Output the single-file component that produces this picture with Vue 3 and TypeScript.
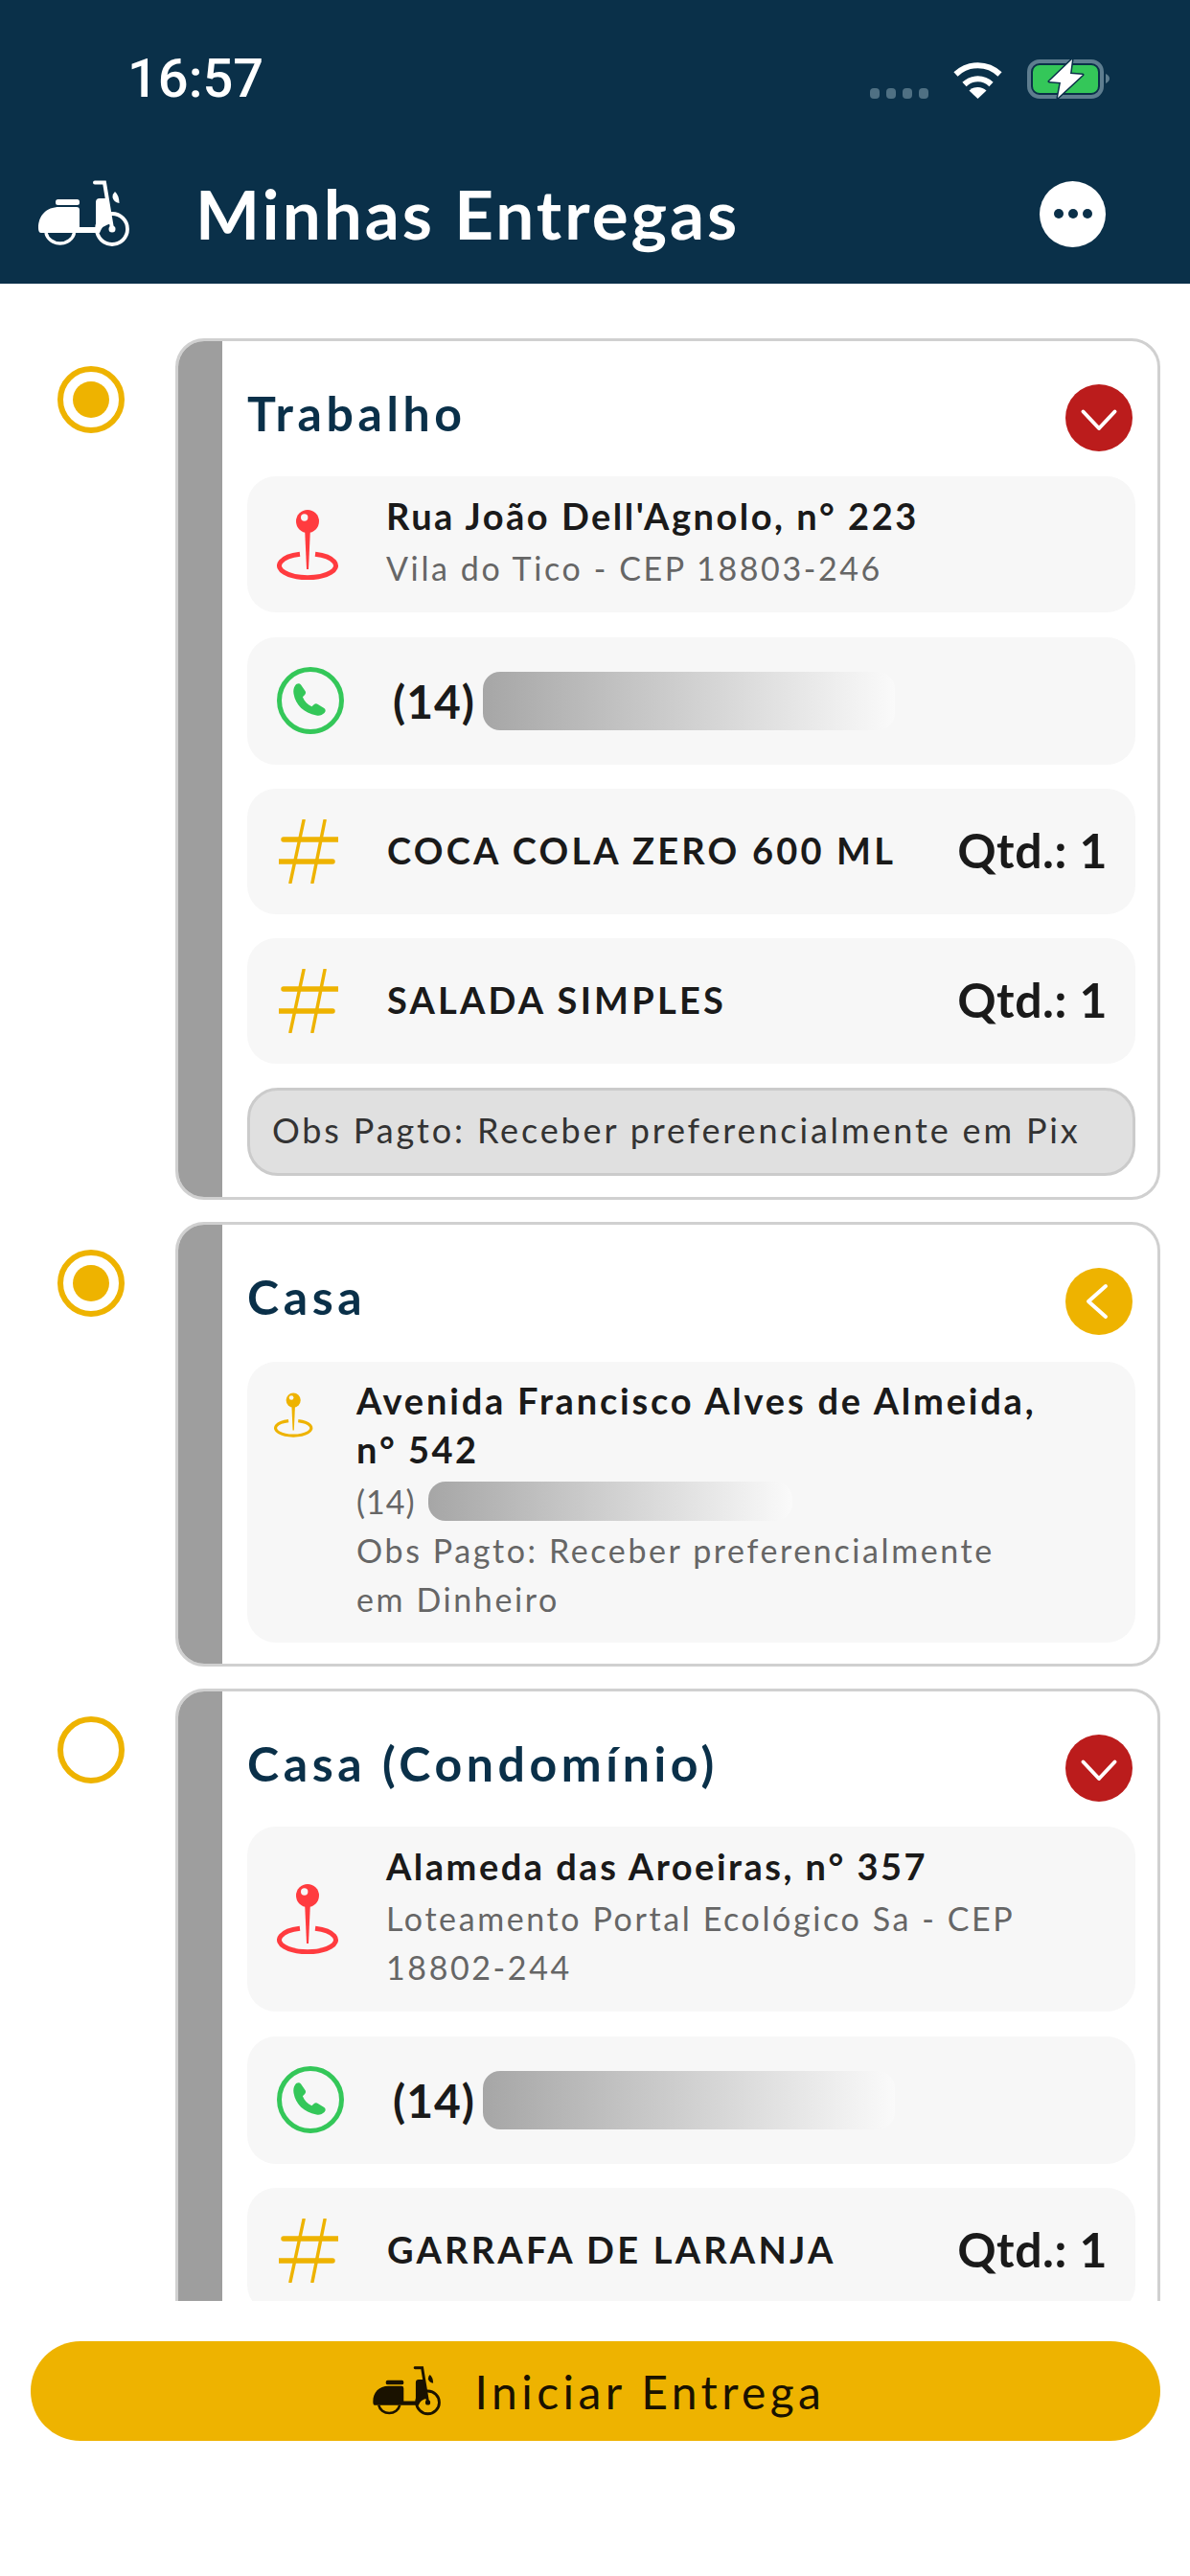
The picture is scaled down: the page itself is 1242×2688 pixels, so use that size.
<template>
  <div class="page">
    <svg class="defs" width="0" height="0">
      <symbol id="scooter" viewBox="10 13 96 70">
        <path d="M10 63c0-13 8-22 22-22h18q3 0 3 3v18h17V36q0-4 4-4h8l5 26q-11 2-13 10H13q-3 0-3-5z" fill="currentColor" />
        <rect x="28" y="33" width="25" height="6" rx="2.5" fill="currentColor" />
        <path d="M18 68a15 13.500 0 0 0 29.500 0" fill="none" stroke="currentColor" stroke-width="3.500" />
        <circle cx="87" cy="64" r="16" fill="none" stroke="currentColor" stroke-width="3.800" />
        <circle cx="87" cy="64" r="3.500" fill="currentColor" />
        <path d="M69 15.500h10l8 48" fill="none" stroke="currentColor" stroke-width="4" stroke-linecap="round" />
        <path d="M90 25q4.500 4 4.500 12q-6-1-7-6q0-4 2.500-6z" fill="currentColor" />
      </symbol>
      <symbol id="pin" viewBox="0 0 65 73">
        <circle cx="32" cy="12" r="12" fill="currentColor" />
        <circle cx="28.700" cy="8" r="3.700" fill="#f7f7f7" />
        <path d="M29 18h6l-2 44h-2z" fill="currentColor" />
        <path d="M24 46.200A29.500 12.500 0 1 0 40 46.200" fill="none" stroke="currentColor" stroke-width="5" />
      </symbol>
    </svg>

    <header class="header">
      <div class="status">
        <span class="time">16:57</span>
        <div class="status-icons">
          <div class="signal"><i v-for="n in 4" :key="n" /></div>
          <svg class="wifi" width="53" height="39" viewBox="0 0 53 39">
            <path d="M3.500 13.500a33 33 0 0 1 46 0M12.500 24a20 20 0 0 1 28 0" fill="none" stroke="#fff" stroke-width="6" />
            <path d="M17.500 30.500a13 13 0 0 1 18 0L26.500 39z" fill="#fff" />
          </svg>
          <svg class="battery" width="86" height="42" viewBox="0 0 86 42">
            <rect x="2" y="3" width="76" height="37" rx="11" fill="none" stroke="#5e7d8f" stroke-width="4" />
            <rect x="6" y="7" width="68" height="29" rx="7" fill="#34c759" />
            <path d="M82 16q4 2 4 5t-4 5z" fill="#5e7d8f" />
            <path d="M47 1 23 24l12 1-3 16 26-24-13-1z" fill="#fff" stroke="#0a3049" stroke-width="3" paint-order="stroke" stroke-linejoin="round" />
          </svg>
        </div>
      </div>
      <div class="nav">
        <svg class="nav-scooter"><use href="#scooter" /></svg>
        <h1>Minhas Entregas</h1>
        <button class="more"><i /><i /><i /></button>
      </div>
    </header>

    <main class="list">
      <div v-for="d in deliveries" :key="d.title" class="delivery">
        <span class="radio" :class="{ on: d.selected }" />
        <section class="card">
          <div class="card-bar" />
          <div class="card-body">
            <div class="card-head">
              <h2>{{ d.title }}</h2>
              <span class="toggle" :class="d.open ? 'red' : 'yellow'">
                <svg width="70" height="70" viewBox="0 0 70 70">
                  <path :d="d.open ? 'M18.500 28.500 35 46l16.500-17.500' : 'M42 19 24 35l18 16'" fill="none" stroke="#fff" stroke-width="4" stroke-linecap="round" stroke-linejoin="round" />
                </svg>
              </span>
            </div>

            <template v-if="d.open">
              <div class="row address">
                <svg class="pin red-pin"><use href="#pin" /></svg>
                <div class="lines">
                  <div class="street">{{ d.street }}</div>
                  <div v-for="line in d.district" :key="line" class="district">{{ line }}</div>
                </div>
              </div>
              <div class="row phone">
                <svg width="70" height="70" viewBox="0 0 70 70">
                  <circle cx="35" cy="35" r="32.500" fill="none" stroke="#34c759" stroke-width="5" />
                  <path d="M19 19.500c1.500-2.500 4.500-3 6-1l4.500 6.500c1 1.500.6 3-.6 4.200l-2 2c1.800 4.500 5 8 9.500 10l2.200-2c1.200-1 2.800-1.200 4.200-.3l6.500 4.200c1.800 1.200 1.800 3.500.2 5-2.200 2-5 3.200-8.300 2.400C28 48 19.500 39.500 17.500 28c-.6-3.500 0-6.300 1.500-8.500z" fill="#34c759" />
                </svg>
                <span class="ddd">(14)</span>
                <span class="blur-bar" />
              </div>
              <div v-for="item in d.items" :key="item" class="row product">
                <svg class="hash" width="62" height="67" viewBox="0 0 62 67">
                  <path d="M5 21h56M1 44h55" stroke="#eeb300" stroke-width="5.500" stroke-linecap="round" />
                  <path d="M26 1 12 66M48 1 35 66" stroke="#eeb300" stroke-width="3.500" stroke-linecap="round" />
                </svg>
                <span class="product-name">{{ item }}</span>
                <span class="qty">Qtd.: 1</span>
              </div>
              <div v-if="d.obs" class="obs">{{ d.obs }}</div>
            </template>

            <div v-else class="row summary">
              <svg class="pin yellow-pin"><use href="#pin" /></svg>
              <div class="lines">
                <div class="street wide">Avenida Francisco Alves de Almeida,</div>
                <div class="street">n° 542</div>
                <div class="district small-phone">(14)<span class="blur-bar small" /></div>
                <div class="district">Obs Pagto: Receber preferencialmente</div>
                <div class="district">em Dinheiro</div>
              </div>
            </div>
          </div>
        </section>
      </div>
    </main>

    <footer class="footer">
      <button class="start">
        <svg class="start-scooter"><use href="#scooter" /></svg>
        <span>Iniciar Entrega</span>
      </button>
    </footer>
  </div>
</template>

<script setup lang="ts">
interface Delivery {
  title: string
  selected: boolean
  open: boolean
  street?: string
  district?: string[]
  items?: string[]
  obs?: string
}

const deliveries: Delivery[] = [
  {
    title: 'Trabalho',
    selected: true,
    open: true,
    street: "Rua João Dell'Agnolo, n° 223",
    district: ['Vila do Tico - CEP 18803-246'],
    items: ['COCA COLA ZERO 600 ML', 'SALADA SIMPLES'],
    obs: 'Obs Pagto: Receber preferencialmente em Pix',
  },
  { title: 'Casa', selected: true, open: false },
  {
    title: 'Casa (Condomínio)',
    selected: false,
    open: true,
    street: 'Alameda das Aroeiras, n° 357',
    district: ['Loteamento Portal Ecológico Sa - CEP', '18802-244'],
    items: ['GARRAFA DE LARANJA'],
  },
]
</script>

<style>
html, body { margin: 0; background: #fff; }
</style>

<style scoped>
.page {
  display: flex; flex-direction: column;
  height: 2688px;
  font-family: Lato, "Open Sans", sans-serif;
  color: #1a1a1a;
  background: #fff;
  overflow: hidden;
}
.defs { position: absolute; }

.header { background: #0a3049; height: 296px; box-sizing: border-box; padding-top: 52px; color: #fff; }
.status { display: flex; justify-content: space-between; align-items: center; height: 60px; padding: 0 84px 0 133px; }
.time { font-family: Roboto, sans-serif; font-weight: 500; font-size: 56px; }
.status-icons { display: flex; align-items: flex-end; }
.signal { display: flex; gap: 7px; margin-right: 25px; }
.signal i { width: 10px; height: 11px; border-radius: 4px; background: #4f7083; }
.wifi { margin-right: 25px; }
.nav { display: flex; align-items: center; height: 70px; margin-top: 76px; padding: 0 88px 0 40px; }
.nav-scooter { width: 96px; height: 70px; color: #fff; }
.nav h1 { flex: 1; margin: 0 0 0 68px; font-size: 71px; font-weight: 700; letter-spacing: 3px; line-height: 70px; }
.more { display: flex; align-items: center; justify-content: center; gap: 5px; width: 69px; height: 69px; padding: 0; border: 0; border-radius: 50%; background: #fff; }
.more i { width: 10px; height: 10px; border-radius: 50%; background: #0a3049; }

.list { flex: 1; min-height: 0; overflow: hidden; display: flex; flex-direction: column; gap: 23px; padding: 57px 31px 0 60px; }
.delivery { display: flex; align-items: flex-start; gap: 53px; flex-shrink: 0; }
.radio { position: relative; flex-shrink: 0; box-sizing: border-box; width: 70px; height: 70px; margin-top: 29px; border: 6px solid #eeb300; border-radius: 50%; }
.radio.on::after { content: ""; position: absolute; inset: 10px; border-radius: 50%; background: #eeb300; }

.card { flex: 1; min-width: 0; display: flex; border: 3px solid #d0d0d0; border-radius: 30px; overflow: hidden; }
.card-bar { width: 46px; flex-shrink: 0; background: #9e9e9e; }
.card-body { flex: 1; min-width: 0; display: flex; flex-direction: column; gap: 25px; padding: 0 23px 22px 26px; }
.card-head { display: flex; align-items: center; justify-content: space-between; height: 70px; margin: 45px 3px 1px 0; }
.card-head h2 { margin: 0 0 10px; font-size: 50px; font-weight: 700; letter-spacing: 4.6px; color: #0a3049; }
.toggle { width: 70px; height: 70px; border-radius: 50%; }
.toggle svg { display: block; }
.toggle.red { background: #bb1c1c; }
.toggle.yellow { background: #eeb300; }

.row { display: flex; align-items: center; background: #f7f7f7; border-radius: 30px; }
.address { padding: 20px 28px 20px 31px; margin-bottom: 1px; }
.pin { flex-shrink: 0; }
.red-pin { width: 65px; height: 73px; margin-right: 49px; color: #ff3b3f; }
.yellow-pin { width: 41px; height: 47px; margin: 13px 45px 0 0; color: #eeb300; align-self: flex-start; }
.lines { min-width: 0; }
.street { margin: -4px 0 4px; font-size: 38px; font-weight: 700; line-height: 51px; letter-spacing: 2.5px; white-space: nowrap; }
.street.wide { letter-spacing: 2.8px; }
.district { margin: -1px 0 1px; font-size: 34px; line-height: 51px; letter-spacing: 2.6px; color: #666; white-space: nowrap; }

.phone { padding: 31px 31px 32px; }
.ddd { margin-left: 51px; font-size: 48px; font-weight: 700; letter-spacing: 1px; }
.blur-bar { display: block; width: 430px; height: 61px; margin-left: 8px; border-radius: 18px; background: linear-gradient(90deg, #a6a6a6, #fafafa); }

.product { padding: 32px 29px 32px 33px; }
.hash { flex-shrink: 0; margin-right: 51px; }
.product-name { flex: 1; margin-bottom: 4px; font-size: 38px; font-weight: 700; letter-spacing: 3.2px; white-space: nowrap; }
.qty { margin-bottom: 4px; font-size: 50px; font-weight: 700; letter-spacing: 0.5px; white-space: nowrap; }

.obs { box-sizing: border-box; height: 92px; padding: 0 23px; border: 3px solid #cbcbcb; border-radius: 32px; background: #e0e0e0; font-size: 36px; line-height: 82px; letter-spacing: 2.85px; color: #333; white-space: nowrap; }

.summary { align-items: flex-start; margin-top: 2px; padding: 19px 28px 19px 28px; }
.small-phone { display: flex; align-items: center; letter-spacing: 1px; }
.blur-bar.small { width: 380px; height: 41px; margin-left: 13px; }

.footer { padding: 42px 31px 141px 32px; }
.start { display: flex; align-items: center; justify-content: center; gap: 35px; width: 100%; height: 104px; padding: 0 0 0 7px; border: 0; border-radius: 52px; background: #eeb300; color: #1a1200; font-family: inherit; font-size: 48px; letter-spacing: 4.4px; }
.start-scooter { width: 72px; height: 52px; }
</style>
